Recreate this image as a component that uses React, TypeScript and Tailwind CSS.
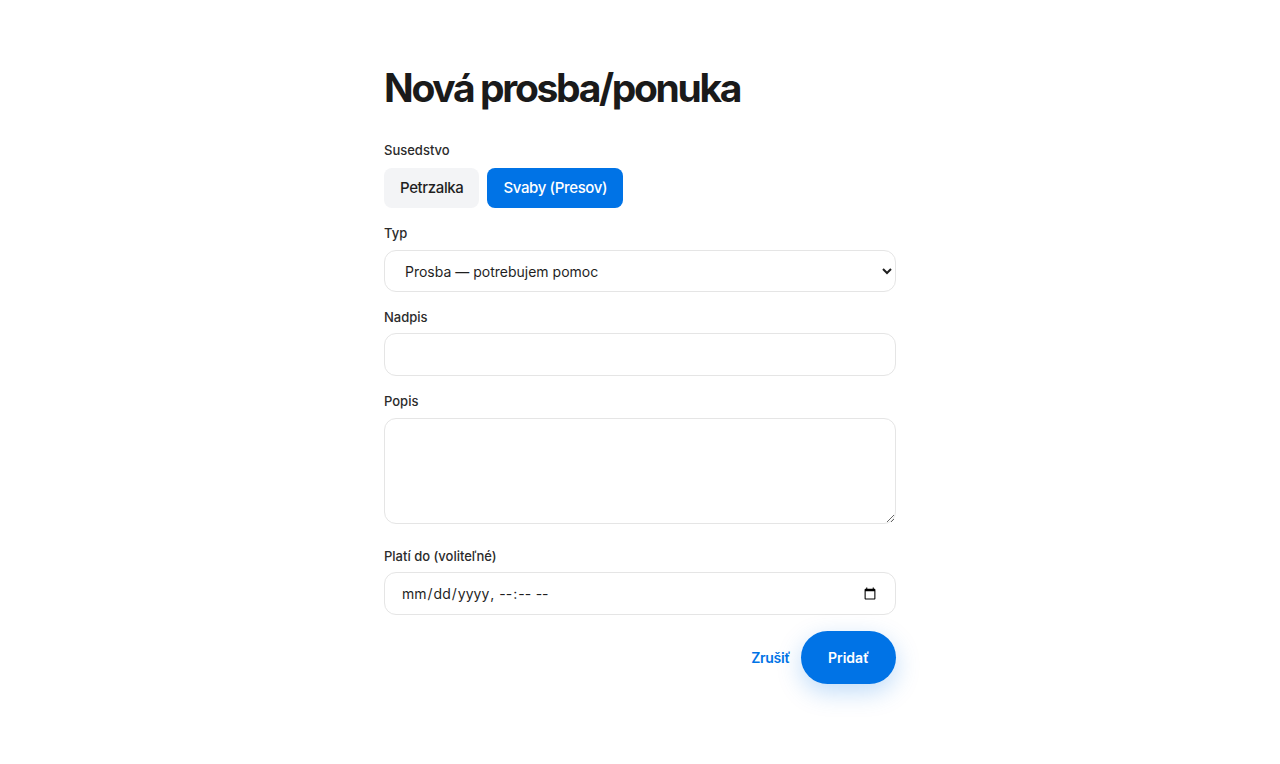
import { useState } from "react";

const neighborhoods = ["Petrzalka", "Svaby (Presov)"];

const font = { fontFamily: "Inter, 'Noto Sans', sans-serif" };

export default function App() {
  const [hood, setHood] = useState("Svaby (Presov)");

  return (
    <div className="min-h-screen w-full bg-white" style={font}>
      <div className="mx-auto w-[512px] pt-[64px]">
        <h1 className="text-[39px] font-bold tracking-[-0.06em] text-[#1a1a1a] leading-[47px]">
          Nová prosba/ponuka
        </h1>

        <form className="mt-[30px] flex flex-col">
          <label className="text-[13px] leading-[18px] font-medium text-[#2b2b2b]">Susedstvo</label>
          <div className="mt-[9px] flex gap-2">
            {neighborhoods.map((n) => (
              <button
                key={n}
                type="button"
                onClick={() => setHood(n)}
                className={
                  hood === n
                    ? "h-10 px-4 rounded-lg bg-[#0073e6] text-white text-[15px] font-medium tracking-[-0.025em]"
                    : "h-10 px-4 rounded-lg bg-[#f3f4f6] text-[#1f1f1f] text-[15px] font-medium tracking-[-0.025em]"
                }
              >
                {n}
              </button>
            ))}
          </div>

          <label className="mt-4 text-[13px] leading-[18px] font-medium text-[#2b2b2b]">Typ</label>
          <select
            className="mt-2 h-[42px] w-full rounded-xl border border-[#e5e5e5] bg-white px-4 text-[14px] text-[#1f1f1f] outline-none"
            style={font}
            defaultValue="prosba"
          >
            <option value="prosba">Prosba — potrebujem pomoc</option>
            <option value="ponuka">Ponuka — môžem pomôcť</option>
          </select>

          <label className="mt-4 text-[13px] leading-[18px] font-medium text-[#2b2b2b]">Nadpis</label>
          <input
            type="text"
            className="mt-[7px] h-[43px] w-full rounded-xl border border-[#e5e5e5] px-4 text-[14px] outline-none"
          />

          <label className="mt-4 text-[13px] leading-[18px] font-medium text-[#2b2b2b]">Popis</label>
          <textarea
            className="mt-2 h-[106px] w-full rounded-xl border border-[#e5e5e5] px-4 py-3 text-[14px] outline-none"
          />

          <label className="mt-[23px] text-[13px] leading-[18px] font-medium text-[#2b2b2b]">Platí do (voliteľné)</label>
          <input
            type="datetime-local"
            className="mt-[7px] h-[43px] w-full rounded-xl border border-[#e5e5e5] px-4 text-[14px] text-[#1f1f1f] outline-none"
            style={font}
          />

          <div className="mt-4 flex items-center justify-end gap-[11px]">
            <button type="button" className="text-[14px] font-semibold tracking-[-0.02em] text-[#0073e6]">
              Zrušiť
            </button>
            <button
              type="submit"
              className="h-[53px] w-[95px] rounded-full bg-[#0073e6] text-[14px] font-semibold text-white shadow-[0_8px_24px_rgba(0,115,230,0.25)]"
            >
              Pridať
            </button>
          </div>
        </form>
      </div>
    </div>
  );
}
